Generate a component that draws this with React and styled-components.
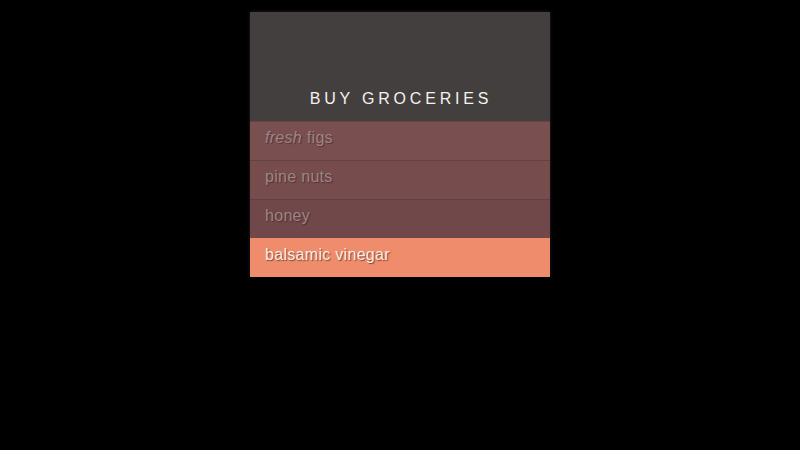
import React from 'react';
import styled, { createGlobalStyle } from 'styled-components';

const Global = createGlobalStyle`
  html, body { margin: 0; background: #000; }
  body { font-family: "Liberation Sans", Arial, sans-serif; }
`;

const Page = styled.div`
  display: flex;
  justify-content: center;
  padding-top: 12px;
`;

const Card = styled.div`
  width: 300px;
  background: #433f3e;
  box-shadow: 0 0 4px rgba(80, 80, 80, 0.4);
`;

const Header = styled.h1`
  margin: 0;
  height: 109px;
  box-sizing: border-box;
  display: flex;
  align-items: flex-end;
  justify-content: center;
  padding-bottom: 13px;
  padding-left: 2px;
  font-size: 16px;
  font-weight: normal;
  letter-spacing: 3.8px;
  color: #f4f1ef;
`;

const List = styled.ul`
  list-style: none;
  margin: 0;
  padding: 0;
`;

const Item = styled.li`
  height: 39px;
  box-sizing: border-box;
  padding: 7px 15px 0;
  font-size: 16px;
  letter-spacing: 0.3px;
  background: ${p => p.$bg};
  color: ${p => (p.$active ? '#fbeee6' : '#9c8586')};
  border-top: 1px solid ${p => (p.$active ? '#ee8c6b' : 'rgba(0,0,0,0.12)')};
  text-shadow: ${p => (p.$active ? '1px 1px 1px rgba(90,40,30,0.7)' : '1px 1px 1px rgba(40,20,20,0.45)')};
  em { font-style: italic; }
`;

const items = [
  { label: <><em>fresh</em> figs</>, bg: '#7a4f50' },
  { label: 'pine nuts', bg: '#764c4d' },
  { label: 'honey', bg: '#714849' },
  { label: 'balsamic vinegar', bg: '#ee8c6b', active: true },
];

export default function App() {
  return (
    <>
      <Global />
      <Page>
        <Card>
          <Header>BUY GROCERIES</Header>
          <List>
            {items.map((it, i) => (
              <Item key={i} $bg={it.bg} $active={it.active}>{it.label}</Item>
            ))}
          </List>
        </Card>
      </Page>
    </>
  );
}
